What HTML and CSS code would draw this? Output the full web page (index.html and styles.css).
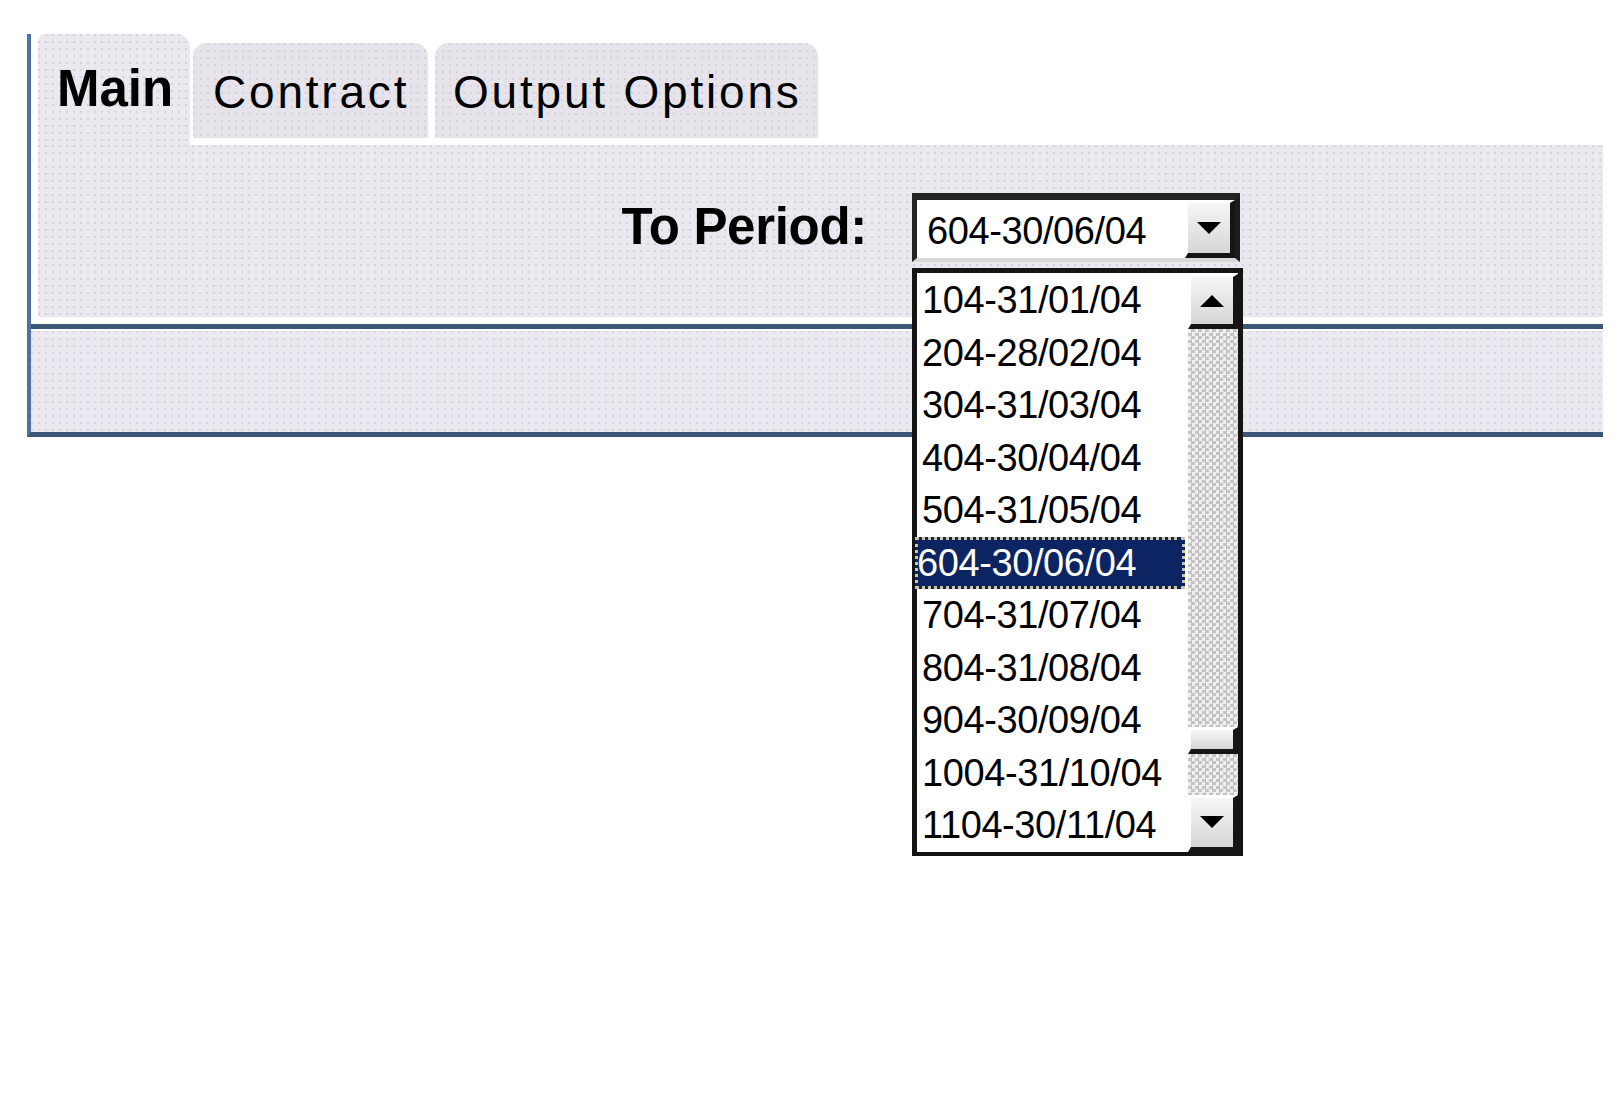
FILE: index.html
```html
<!DOCTYPE html>
<html lang="en">
<head>
<meta charset="utf-8">
<title>To Period</title>
<link rel="stylesheet" href="styles.css">
</head>
<body>
<div class="page">
<div class="frame">
  <div class="top">
    <div class="tabs">
      <div class="tab tab-active tex">Main</div>
      <div class="tab tab-contract tex">Contract</div>
      <div class="tab tab-output tex">Output Options</div>
    </div>
    <div class="panel tex">
      <div class="field-row">
        <label class="field-label">To Period:</label>
        <div class="combo">
          <div class="combo-box">
            <span class="combo-value">604-30/06/04</span>
            <span class="btn combo-btn"><svg width="24" height="12" viewBox="0 0 24 12"><polygon points="0,0 24,0 12,12" fill="#000"/></svg></span>
          </div>
          <div class="dropdown">
            <ul class="options">
              <li>104-31/01/04</li>
              <li>204-28/02/04</li>
              <li>304-31/03/04</li>
              <li>404-30/04/04</li>
              <li>504-31/05/04</li>
              <li class="selected">604-30/06/04</li>
              <li>704-31/07/04</li>
              <li>804-31/08/04</li>
              <li>904-30/09/04</li>
              <li>1004-31/10/04</li>
              <li>1104-30/11/04</li>
            </ul>
            <div class="scrollbar">
              <div class="btn sb-up"><svg width="24" height="12" viewBox="0 0 24 12"><polygon points="0,12 24,12 12,0" fill="#000"/></svg></div>
              <div class="sb-track"></div>
              <div class="btn sb-thumb"></div>
              <div class="sb-track sb-track-end"></div>
              <div class="btn sb-down"><svg width="24" height="12" viewBox="0 0 24 12"><polygon points="0,0 24,0 12,12" fill="#000"/></svg></div>
            </div>
          </div>
        </div>
      </div>
    </div>
  </div>
  <div class="rule"></div>
  <div class="lower tex-lower"></div>
</div>
</div>
</body>
</html>
```
FILE: styles.css
```css
* { box-sizing: border-box; }

html, body {
  margin: 0;
  min-height: 1110px;
}

body {
  background: #ffffff;
  color: #000;
  font-family: "Liberation Sans", Arial, sans-serif;
}

.page {
  min-height: 1110px;
  padding-top: 34px;
}

.frame {
  margin: 0 0 0 27px;
  width: 1576px;
  border-left: 4px solid #4c74a2;
  border-bottom: 5px solid #3a5674;
}

.top {
  padding: 0 0 7px 7px;
}

.tex {
  background-color: #ebe9ef;
  background-image: radial-gradient(circle at 1px 1px, #d6d2dd 0.9px, transparent 1.3px);
  background-size: 7px 7px;
}

.tex-lower {
  background-color: #ebe9ef;
  background-image: radial-gradient(circle at 1px 1px, #d4d4e2 0.9px, transparent 1.3px);
  background-size: 7px 7px;
}

/* Tabs */
.tabs {
  display: flex;
  align-items: flex-start;
  height: 111px;
}

.tab {
  height: 95px;
  margin-top: 9px;
  padding-top: 26px;
  font-size: 46px;
  line-height: 46px;
  letter-spacing: 2.8px;
  white-space: nowrap;
  border-radius: 14px 14px 0 0;
  background-color: #e6e4ea;
}

.tab-active {
  width: 152px;
  height: 111px;
  margin-top: 0;
  padding: 29px 0 0 19px;
  font-size: 51px;
  line-height: 51px;
  font-weight: bold;
  letter-spacing: 0;
  border-radius: 8px 13px 0 0;
  background-color: #ebe9ef;
}

.tab-contract {
  width: 235px;
  margin-left: 3px;
  padding-left: 20px;
}

.tab-output {
  width: 383px;
  margin-left: 7px;
  padding-left: 18px;
}

/* Panel */
.panel {
  width: 1565px;
  height: 172px;
  padding-top: 48px;
}

.field-row {
  display: grid;
  grid-template-columns: 829px 328px;
  column-gap: 45px;
  align-items: baseline;
}

.field-label {
  text-align: right;
  font-weight: bold;
  font-size: 51px;
  line-height: 57px;
  letter-spacing: -0.3px;
}

.combo {
  position: relative;
}

.combo-box {
  display: flex;
  height: 69px;
  background: #fff;
  border-style: solid;
  border-width: 7px 5px 4px 5px;
  border-color: #232323 #1c1c1c #d9d9d9 #232323;
}

.combo-value {
  flex: 1;
  padding: 4px 0 0 10px;
  font-size: 38px;
  line-height: 54px;
  letter-spacing: -0.4px;
}

.btn {
  display: flex;
  align-items: center;
  justify-content: center;
  background: linear-gradient(#f6f6f6, #d6d6d6);
  border-style: solid;
  border-width: 3px 5px 5px 3px;
  border-color: #ffffff #151515 #151515 #ffffff;
}

.combo-btn {
  width: 50px;
  height: 58px;
}

/* Dropdown list */
.dropdown {
  position: absolute;
  top: 75px;
  left: 0;
  z-index: 5;
  width: 331px;
  display: flex;
  background: #fff;
  border: 5px solid #141414;
  border-bottom-width: 4px;
  padding-top: 1px;
}

.options {
  list-style: none;
  margin: 0;
  padding: 0;
  width: 268px;
}

.options li {
  height: 52.5px;
  padding-left: 5px;
  font-size: 38px;
  line-height: 52.5px;
  letter-spacing: -0.4px;
  white-space: nowrap;
}

.options li.selected {
  background: #0c2562;
  color: #fff;
  outline: 3px dotted #cdc6a4;
  outline-offset: -3px;
  padding-left: 2px;
  margin-left: -2px;
  width: 270px;
}

.scrollbar {
  width: 50px;
  margin-left: 3px;
  display: flex;
  flex-direction: column;
}

.sb-up {
  height: 55px;
}

.sb-track {
  flex: 1;
  background-color: #f0f0f0;
  background-image: conic-gradient(#c4c4c4 25%, #f0f0f0 0 50%, #c4c4c4 0 75%, #f0f0f0 0);
  background-size: 7px 7px;
}

.sb-thumb {
  height: 27px;
}

.sb-track-end {
  flex: 0 0 41px;
}

.sb-down {
  height: 57px;
}

/* Lower section */
.rule {
  height: 5px;
  background: #3b5877;
}

.lower {
  height: 103px;
  border-top: 2px solid #fff;
}
```
